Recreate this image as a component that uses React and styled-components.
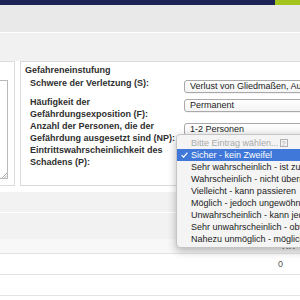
import React from "react";
import styled, { createGlobalStyle } from "styled-components";

const Global = createGlobalStyle`
  html, body { margin: 0; padding: 0; background: #fff; }
  body { width: 300px; height: 300px; overflow: hidden; font-family: "Liberation Sans", Arial, sans-serif; }
`;

const Page = styled.div`
  width: 300px;
  height: 300px;
  overflow: hidden;
  display: flex;
  flex-direction: column;
`;

const TopBar = styled.div`
  display: flex;
  height: 5px;
  flex-shrink: 0;
`;

const Navy = styled.div`
  flex: 1;
  background: #1c2357;
`;

const Lime = styled.div`
  width: 25px;
  background: #a2c41c;
`;

const Band = styled.div`
  flex-shrink: 0;
  height: ${(p) => p.h}px;
  background: ${(p) => p.bg};
  border-bottom: ${(p) => (p.line ? "1px solid #fff" : "none")};
`;

const Main = styled.div`
  display: flex;
  gap: 5px;
  flex-shrink: 0;
  width: 340px;
`;

const SidePanel = styled.div`
  width: 14px;
  border: 1px solid #dcdcdc;
  border-left: none;
  padding-top: 18px;
  flex-shrink: 0;
`;

const TextArea = styled.div`
  position: relative;
  width: 7px;
  height: 97px;
  border: 1px solid #b9b9b9;
  border-left: none;
  background: #fff;
`;

const Grip = styled.svg`
  position: absolute;
  right: 0;
  bottom: 0;
`;

const Fieldset = styled.div`
  flex: 1;
  border: 1px solid #dadada;
  padding: 2px 0 17px 4px;
`;

const Legend = styled.div`
  font-size: 9px;
  line-height: 12px;
  font-weight: bold;
  color: #2e2e2e;
`;

const FormGrid = styled.div`
  margin: 1px 0 0 5px;
  display: grid;
  grid-template-columns: 154px 1fr;
  align-items: start;
`;

const Label = styled.div`
  font-size: 9px;
  line-height: 12px;
  font-weight: bold;
  color: #2f2f2f;
  white-space: nowrap;
`;

const SelectWrap = styled.div`
  position: relative;
  margin: 3px 0;
`;

const Select = styled.div`
  width: 170px;
  height: 11px;
  border: 1px solid #a9a9a9;
  border-radius: 3px;
  background: linear-gradient(#ffffff, #f4f4f4);
  box-shadow: 0 1px 0 rgba(0, 0, 0, 0.05);
  font-size: 9px;
  line-height: 11px;
  color: #222;
  padding-left: 5px;
  white-space: nowrap;
  overflow: hidden;
`;

const Menu = styled.div`
  position: absolute;
  left: -8px;
  top: -13px;
  width: 170px;
  padding: 2px 0;
  background: #f4f4f4;
  border: 1px solid #c4c4c4;
  border-radius: 4px;
  box-shadow: 0 3px 8px rgba(0, 0, 0, 0.28);
  z-index: 5;
`;

const Item = styled.div`
  height: 12px;
  display: flex;
  align-items: center;
  padding-left: 14px;
  font-size: 9px;
  line-height: 12px;
  white-space: nowrap;
  position: relative;
  color: ${(p) => (p.disabled ? "#a9a9a9" : p.selected ? "#fff" : "#222")};
  background: ${(p) => (p.selected ? "#3f78d8" : "transparent")};
`;

const Check = styled.svg`
  position: absolute;
  left: 4px;
  top: 3px;
`;

const QBox = styled.span`
  display: inline-block;
  width: 8px;
  height: 8px;
  margin-left: 1px;
  border: 1px solid #b0b0b0;
  font-size: 7px;
  line-height: 8px;
  text-align: center;
  color: #a0a0a0;
  box-sizing: border-box;
`;

const Spacer = styled.div`
  height: 6px;
  flex-shrink: 0;
`;

const TableRow = styled.div`
  flex-shrink: 0;
  height: ${(p) => p.h}px;
  background: ${(p) => p.bg || "#fff"};
  border-bottom: 1px solid #e3e3e3;
  display: flex;
  align-items: center;
  justify-content: flex-end;
  padding-right: ${(p) => p.pr}px;
  font-size: 9px;
  color: ${(p) => (p.head ? "#7a7a7a" : "#555")};
  font-weight: ${(p) => (p.head ? "bold" : "normal")};
`;

const options = [
  "Sehr wahrscheinlich - ist zu erwarten",
  "Wahrscheinlich - nicht überraschend",
  "Vielleicht - kann passieren",
  "Möglich - jedoch ungewöhnlich",
  "Unwahrscheinlich - kann jedoch passieren",
  "Sehr unwahrscheinlich - obwohl denkbar",
  "Nahezu unmöglich - möglich, jedoch sehr unwahrscheinlich",
];

export default function App() {
  return (
    <Page>
      <Global />
      <TopBar>
        <Navy />
        <Lime />
      </TopBar>
      <Band h={27} bg="#e9e9e9" line />
      <Band h={28} bg="#f1f1f1" />
      <Main>
        <SidePanel>
          <TextArea>
            <Grip width="6" height="6" viewBox="0 0 6 6">
              <path d="M1 6 L6 1 M3.5 6 L6 3.5" stroke="#999" strokeWidth="0.8" />
            </Grip>
          </TextArea>
        </SidePanel>
        <Fieldset>
          <Legend>Gefahreneinstufung</Legend>
          <FormGrid>
            <Label>Schwere der Verletzung (S):</Label>
            <SelectWrap>
              <Select>Verlust von Gliedmaßen, Augenlicht</Select>
            </SelectWrap>
            <Label>
              Häufigkeit der
              <br />
              Gefährdungsexposition (F):
            </Label>
            <SelectWrap>
              <Select>Permanent</Select>
            </SelectWrap>
            <Label>
              Anzahl der Personen, die der
              <br />
              Gefährdung ausgesetzt sind (NP):
            </Label>
            <SelectWrap>
              <Select>1-2 Personen</Select>
            </SelectWrap>
            <Label>
              Eintrittswahrscheinlichkeit des
              <br />
              Schadens (P):
            </Label>
            <SelectWrap>
              <Select>Sicher - kein Zweifel</Select>
              <Menu>
                <Item disabled>
                  Bitte Eintrag wählen...<QBox>?</QBox>
                </Item>
                <Item selected>
                  <Check width="7" height="6" viewBox="0 0 7 6">
                    <path d="M0.6 3.2 L2.6 5.2 L6.4 0.6" fill="none" stroke="#fff" strokeWidth="1.2" />
                  </Check>
                  Sicher - kein Zweifel
                </Item>
                {options.map((o) => (
                  <Item key={o}>{o}</Item>
                ))}
              </Menu>
            </SelectWrap>
          </FormGrid>
        </Fieldset>
      </Main>
      <Spacer />
      <Band h={20} bg="#f2f2f2" line />
      <Band h={26} bg="#f2f2f2" />
      <TableRow h={14} bg="#f8f8f8" pr={5} head>
        HH
      </TableRow>
      <TableRow h={20} pr={17}>
        0
      </TableRow>
      <TableRow h={20} pr={17} />
    </Page>
  );
}
